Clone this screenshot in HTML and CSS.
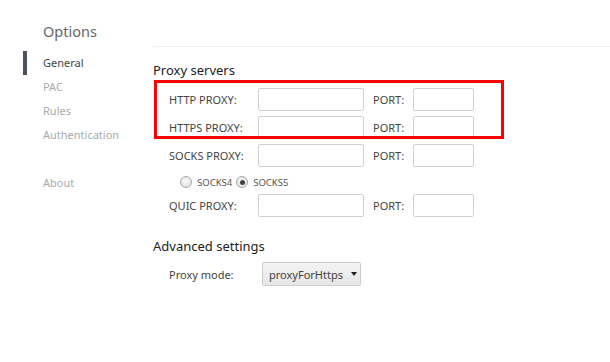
FILE: index.html
```html
<!DOCTYPE html>
<html>
<head>
<meta charset="utf-8">
<link rel="stylesheet" href="styles.css">
</head>
<body>
<div class="page">
  <aside class="sidebar">
    <div class="title">Options</div>
    <nav class="nav">
      <div class="item active">General</div>
      <div class="item">PAC</div>
      <div class="item">Rules</div>
      <div class="item">Authentication</div>
      <div class="item about">About</div>
    </nav>
  </aside>
  <main class="main">
    <h2 class="heading">Proxy servers</h2>
    <div class="rows">
      <div class="row">
        <label class="label">HTTP PROXY:</label>
        <input class="field" type="text">
        <label class="port-label">PORT:</label>
        <input class="field port" type="text">
      </div>
      <div class="row">
        <label class="label">HTTPS PROXY:</label>
        <input class="field" type="text">
        <label class="port-label">PORT:</label>
        <input class="field port" type="text">
      </div>
      <div class="row">
        <label class="label">SOCKS PROXY:</label>
        <input class="field" type="text">
        <label class="port-label">PORT:</label>
        <input class="field port" type="text">
      </div>
      <div class="radio-row">
        <span class="radio"></span><span class="radio-text">SOCKS4</span>
        <span class="radio checked"></span><span class="radio-text">SOCKS5</span>
      </div>
      <div class="row">
        <label class="label">QUIC PROXY:</label>
        <input class="field" type="text">
        <label class="port-label">PORT:</label>
        <input class="field port" type="text">
      </div>
    </div>
    <h2 class="heading advanced">Advanced settings</h2>
    <div class="mode-row">
      <span class="mode-label">Proxy mode:</span>
      <div class="select"><span>proxyForHttps</span><span class="caret"></span></div>
    </div>
  </main>
  <div class="highlight"></div>
</div>
</body>
</html>
```

FILE: styles.css
```css
html, body {
  margin: 0;
  padding: 0;
  background: #fff;
}
body {
  font-family: "Noto Sans", "Open Sans", sans-serif;
  color: #444;
}
.page {
  position: relative;
  display: flex;
  width: 610px;
  height: 362px;
  overflow: hidden;
}
.sidebar {
  width: 153px;
  flex: none;
  padding-top: 21px;
  box-sizing: border-box;
}
.title {
  margin-left: 43px;
  font-size: 14.5px;
  line-height: 20px;
  color: #666;
  margin-bottom: 10px;
}
.nav .item {
  margin-left: 23px;
  border-left: 4px solid transparent;
  padding-left: 16px;
  font-size: 11px;
  line-height: 24px;
  color: #aaa;
}
.nav .item.active {
  border-left-color: #4b5260;
  color: #444;
}
.nav .item.about {
  margin-top: 24px;
}
.main {
  flex: 1;
  margin-top: 46px;
  border-top: 1px solid #efefef;
  align-self: flex-start;
}
.heading {
  margin: 14px 0 0;
  font-size: 13px;
  line-height: 18px;
  font-weight: normal;
  color: #222;
}
.rows {
  padding-top: 9px;
  display: flex;
  flex-direction: column;
  gap: 5px;
}
.row {
  display: flex;
  align-items: center;
  height: 23px;
  padding-left: 16px;
}
.label {
  width: 89px;
  font-size: 11px;
  color: #444;
}
.field {
  width: 106px;
  height: 23px;
  box-sizing: border-box;
  border: 1px solid #d0d0d0;
  border-radius: 2px;
  margin: 0;
  padding: 0 4px;
  background: #fff;
}
.port-label {
  margin-left: 9px;
  width: 40px;
  font-size: 11px;
  color: #444;
}
.field.port {
  width: 61px;
}
.radio-row {
  display: flex;
  align-items: center;
  height: 22px;
  box-sizing: border-box;
  padding-top: 8px;
  margin-top: -5px;
  padding-left: 27px;
}
.radio {
  width: 12px;
  height: 12px;
  box-sizing: border-box;
  border-radius: 50%;
  border: 1px solid #a8a8a8;
  background: radial-gradient(circle at 50% 40%, #fafafa, #dcdcdc);
  position: relative;
}
.radio.checked::after {
  content: "";
  position: absolute;
  left: 2.5px;
  top: 2.5px;
  width: 5px;
  height: 5px;
  border-radius: 50%;
  background: #444;
}
.radio-text {
  font-size: 9.5px;
  color: #555;
  margin-left: 5px;
  margin-right: 4px;
}
.heading.advanced {
  margin-top: 20px;
}
.mode-row {
  display: flex;
  align-items: center;
  margin-top: 7px;
  padding-left: 16px;
}
.mode-label {
  width: 93px;
  font-size: 11px;
  color: #444;
}
.select {
  width: 99px;
  height: 24px;
  box-sizing: border-box;
  border: 1px solid #cdcdcd;
  border-radius: 2px;
  background: linear-gradient(#f3f3f3, #e6e6e6);
  display: flex;
  align-items: center;
  padding-left: 6px;
  font-size: 11px;
  color: #444;
}
.caret {
  margin-left: 8px;
  width: 0;
  height: 0;
  border-left: 3.5px solid transparent;
  border-right: 3.5px solid transparent;
  border-top: 4px solid #222;
}
.highlight {
  position: absolute;
  left: 154px;
  top: 80px;
  width: 350px;
  height: 59px;
  box-sizing: border-box;
  border: 3px solid #f00;
}
```
